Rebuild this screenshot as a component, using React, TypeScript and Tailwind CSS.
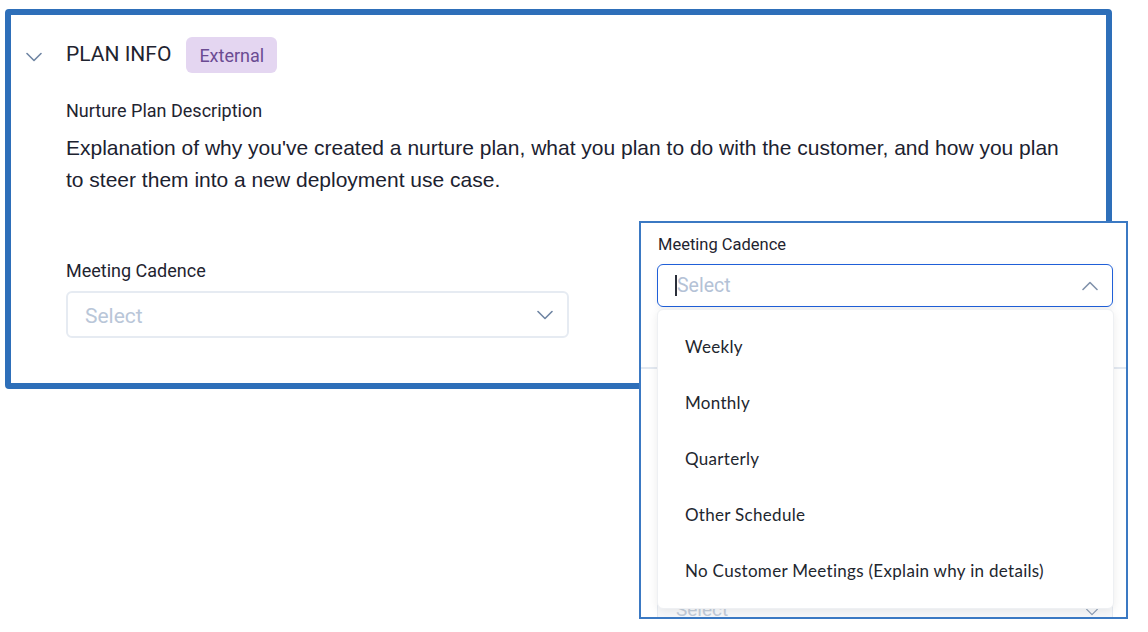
import React from 'react'

const ChevronDown = ({ className }: { className?: string }) => (
  <svg viewBox="0 0 16 10" fill="none" className={className}>
    <path d="M1 1.5L8 8.5L15 1.5" stroke="currentColor" strokeWidth="1.6" strokeLinecap="round" strokeLinejoin="round" />
  </svg>
)

const ChevronUp = ({ className }: { className?: string }) => (
  <svg viewBox="0 0 16 10" fill="none" className={className}>
    <path d="M1 8.5L8 1.5L15 8.5" stroke="currentColor" strokeWidth="1.6" strokeLinecap="round" strokeLinejoin="round" />
  </svg>
)

const options = [
  'Weekly',
  'Monthly',
  'Quarterly',
  'Other Schedule',
  'No Customer Meetings (Explain why in details)',
]

const App = () => {
  return (
    <div className="relative w-[1148px] h-[632px] bg-white overflow-hidden font-['Roboto',sans-serif]">
      {/* main section card */}
      <div className="ml-[5px] mt-[9px] w-[1107px] h-[380px] border-[6px] border-[#2e6fb9] rounded-[4px] pl-[15px] pt-[22px]">
        <div className="flex items-start">
          <div className="w-[16px] h-[36px] flex items-center">
            <ChevronDown className="w-[16px] h-[10px] text-[#6f85a3] mt-[4px]" />
          </div>
          <div className="ml-[24px] flex flex-col">
            <div className="flex items-center h-[36px]">
              <span className="text-[21px] text-[#1f2430]">PLAN INFO</span>
              <span className="ml-[15px] h-[36px] px-[13px] flex items-center rounded-[6px] bg-[#e4d6f1] text-[#6b4b93] text-[18px]">
                External
              </span>
            </div>
            <div className="mt-[26px] text-[18px] leading-[24px] text-[#1f2430]">Nurture Plan Description</div>
            <p className="mt-[9px] w-[1010px] text-[21px] leading-[32px] text-[#1c2230] font-['Liberation_Sans',Arial,sans-serif]">
              Explanation of why you've created a nurture plan, what you plan to do with the customer, and how you plan to steer them into a new deployment use case.
            </p>
            <div className="mt-[63px] text-[18px] leading-[24px] text-[#1f2430]">Meeting Cadence</div>
            <div className="mt-[8px] w-[503px] h-[47px] border-2 border-[#e6ebf2] rounded-[6px] flex items-center justify-between pl-[17px] pr-[14px]">
              <span className="text-[21px] leading-[28px] mt-[3px] text-[#b9c6d8]">Select</span>
              <ChevronDown className="w-[16px] h-[10px] text-[#6f85a3]" />
            </div>
          </div>
        </div>
      </div>

      {/* zoomed open dropdown callout */}
      <div className="absolute left-[639px] top-[221px] w-[489px] h-[398px] border-2 border-[#3b79c3] bg-white overflow-hidden">
        <div className="relative w-full h-full">
          {/* content behind the menu */}
          <div className="absolute left-0 right-0 top-[144px] h-[2px] bg-[#e3e9f1]" />
          <div className="absolute left-[16px] top-[370px] w-[456px] h-[42px] border border-[#e6ebf2] rounded-[6px] bg-[#f7f8fa] flex items-start justify-between pl-[18px] pr-[14px] pt-[4px]">
            <span className="text-[19px] leading-[24px] text-[#c3ccd9]">Select</span>
            <ChevronDown className="w-[12px] h-[8px] text-[#8a9bb3] mt-[10px]" />
          </div>

          <div className="absolute left-[17px] top-[11px] text-[16.5px] leading-[22px] text-[#1f2430]">Meeting Cadence</div>
          <div className="absolute left-[16px] top-[41px] w-[456px] h-[43px] border-[1.5px] border-[#1f5fd8] rounded-[6px] flex items-center justify-between pl-[17px] pr-[14px] shadow-[0_2px_6px_rgba(0,0,0,0.06)]">
            <div className="flex items-center">
              <span className="w-[2px] h-[21px] bg-[#2a2f3a]" />
              <span className="text-[19.5px] text-[#b4c2d6]">Select</span>
            </div>
            <ChevronUp className="w-[16px] h-[10px] text-[#8092ab]" />
          </div>

          <div className="absolute left-[16px] top-[86px] w-[457px] h-[300px] bg-white rounded-[6px] border border-[#eef0f3] shadow-[0_2px_10px_rgba(0,0,0,0.08)] py-[9px] flex flex-col font-['Lato',sans-serif]">
            {options.map((o) => (
              <div key={o} className="h-[56px] flex items-center pl-[27px] text-[17px] text-[#22262e] tracking-[0.3px]">
                {o}
              </div>
            ))}
          </div>
        </div>
      </div>
    </div>
  )
}

export default App
